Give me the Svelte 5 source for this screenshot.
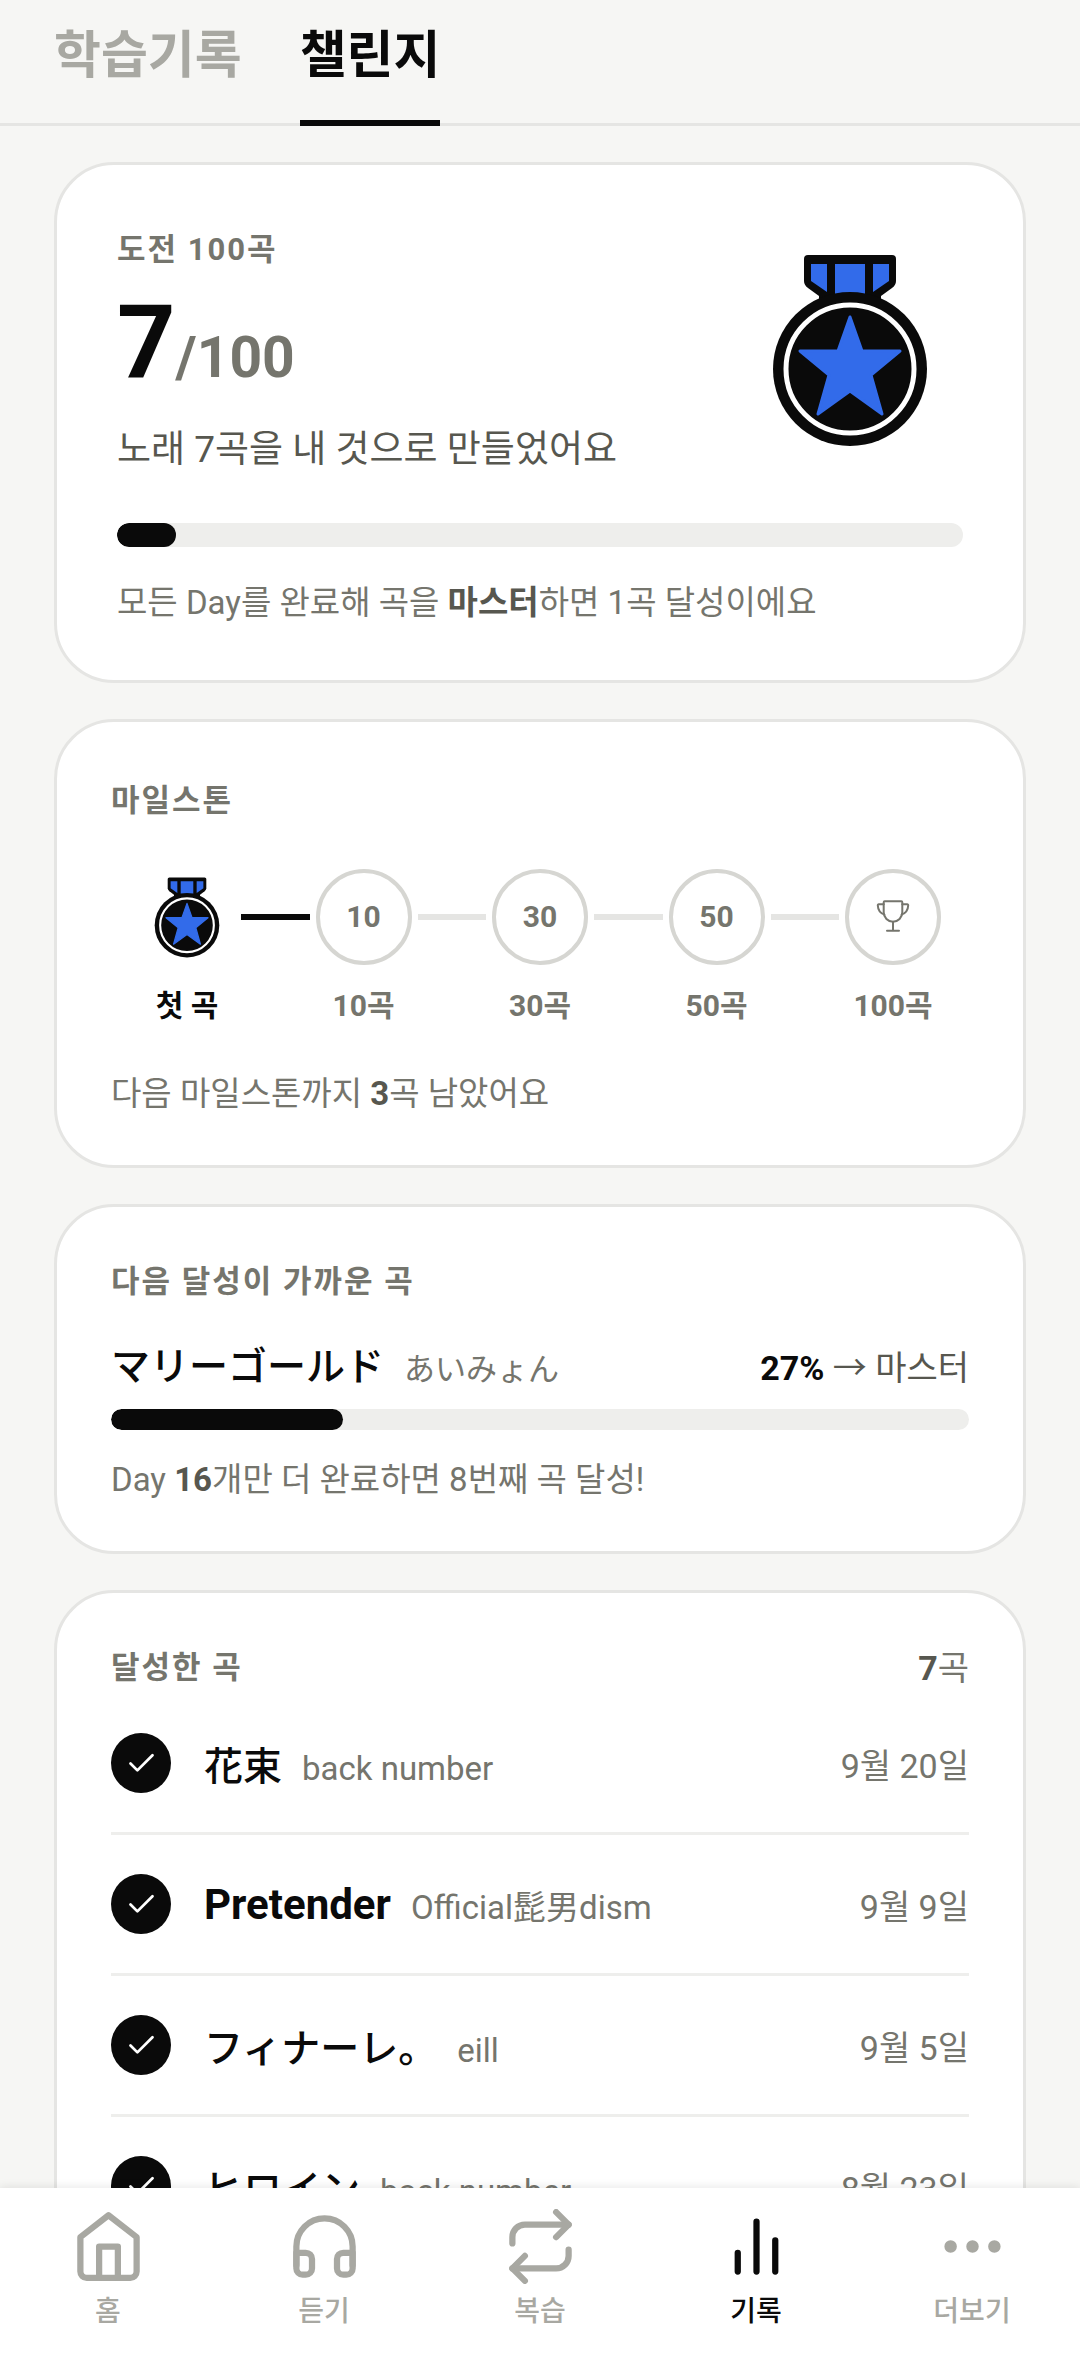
<script lang="ts">
    type Milestone = { label: string; value?: number; reached?: boolean };
    type Song = { title: string; artist: string; date: string; lang: string };

    const tabs = ['학습기록', '챌린지'];
    let activeTab = '챌린지';

    const goal = 100;
    const mastered = 7;

    const milestones: Milestone[] = [
        { label: '첫 곡', reached: true },
        { label: '10곡', value: 10 },
        { label: '30곡', value: 30 },
        { label: '50곡', value: 50 },
        { label: '100곡' },
    ];

    const nextSong = { title: 'マリーゴールド', artist: 'あいみょん', percent: 27, daysLeft: 16 };

    const songs: Song[] = [
        { title: '花束', artist: 'back number', date: '9월 20일', lang: 'ja' },
        { title: 'Pretender', artist: 'Official髭男dism', date: '9월 9일', lang: 'en' },
        { title: 'フィナーレ。', artist: 'eill', date: '9월 5일', lang: 'ja' },
        { title: 'ヒロイン', artist: 'back number', date: '8월 23일', lang: 'ja' },
    ];

    const navItems = [
        { id: 'home', label: '홈' },
        { id: 'listen', label: '듣기' },
        { id: 'review', label: '복습' },
        { id: 'record', label: '기록' },
        { id: 'more', label: '더보기' },
    ];
    let activeNav = 'record';

    $: goalPercent = (mastered / goal) * 100;
</script>

{#snippet medal()}
    <rect x="50" y="36" width="62" height="16" fill="#0a0a0a" />
    <path d="M39 1h84q4 0 4 4v22q0 4-4 7l-11 8H50l-11-8q-4-3-4-7V5q0-4 4-4z" fill="#0a0a0a" />
    <path d="M42 10h16v28l-16-11z M66 10h30v31H66z M104 10h16v17l-16 11z" fill="#326bea" />
    <circle cx="81" cy="115" r="77" fill="#0a0a0a" />
    <circle cx="81" cy="115" r="64" fill="none" stroke="#fff" stroke-width="5" />
    <path
        d="M81 63l12 34h38l-29 24 11 39-32-23-32 23 11-39-29-24h38z"
        fill="#326bea" stroke="#326bea" stroke-width="3" stroke-linejoin="round"
    />
{/snippet}

<div class="app">
    <header class="tabs">
        {#each tabs as tab}
            <button class="tab" class:activeTab={activeTab === tab} on:click={() => (activeTab = tab)}>{tab}</button>
        {/each}
    </header>

    <main>
        <section class="card hero">
            <div class="hero-top">
                <div class="hero-text">
                    <h2>도전 100곡</h2>
                    <p class="score"><b>{mastered}</b><span>/{goal}</span></p>
                    <p class="summary">노래 {mastered}곡을 내 것으로 만들었어요</p>
                </div>
                <svg class="hero-medal" viewBox="-34 -16 228 228" aria-hidden="true">{@render medal()}</svg>
            </div>
            <div class="track large"><div class="fill" style="width: {goalPercent}%"></div></div>
            <p class="note">모든 Day를 완료해 곡을 <b>마스터</b>하면 1곡 달성이에요</p>
        </section>

        <section class="card steps">
            <h2>마일스톤</h2>
            <ol class="milestones">
                {#each milestones as stone, i}
                    {#if i > 0}
                        <li class="link" class:done={milestones[i - 1].reached} aria-hidden="true"></li>
                    {/if}
                    <li class="stone" class:reached={stone.reached}>
                        <div class="badge">
                            {#if stone.reached}
                                <svg class="small-medal" viewBox="0 0 162 193" aria-hidden="true">{@render medal()}</svg>
                            {:else if stone.value}
                                {stone.value}
                            {:else}
                                <svg class="trophy" viewBox="0 0 36 36" aria-hidden="true">
                                    <path d="M9.7 2.3h16.6q1 0 1 1v10a9.3 9.4 0 0 1-18.6 0v-10q0-1 1-1z" />
                                    <path d="M8.7 5.3H3.8q-1.1 0-1 1.2c.2 4.6 2.4 7.6 6.6 9.1M27.3 5.3h4.9q1.1 0 1 1.2c-.2 4.6-2.4 7.6-6.6 9.1" />
                                    <path d="M18 22.7v9M12 31.8h12" />
                                </svg>
                            {/if}
                        </div>
                        <span>{stone.label}</span>
                    </li>
                {/each}
            </ol>
            <p class="note">다음 마일스톤까지 <b>3</b>곡 남았어요</p>
        </section>

        <section class="card">
            <h2>다음 달성이 가까운 곡</h2>
            <div class="next">
                <div class="song-name">
                    <span class="title" lang="ja">{nextSong.title}</span>
                    <span class="artist" lang="ja">{nextSong.artist}</span>
                </div>
                <p class="percent"><b>{nextSong.percent}%</b> → 마스터</p>
            </div>
            <div class="track"><div class="fill" style="width: {nextSong.percent}%"></div></div>
            <p class="note">Day <b>{nextSong.daysLeft}</b>개만 더 완료하면 8번째 곡 달성!</p>
        </section>

        <section class="card">
            <div class="list-head">
                <h2>달성한 곡</h2>
                <p class="count"><b>{mastered}</b>곡</p>
            </div>
            <ul class="songs">
                {#each songs as song}
                    <li>
                        <span class="check">
                            <svg viewBox="0 0 24 24" aria-hidden="true"><polyline points="20 6 9 17 4 12" /></svg>
                        </span>
                        <div class="song-name">
                            <span class="title" lang={song.lang}>{song.title}</span>
                            <span class="artist">{song.artist}</span>
                        </div>
                        <time>{song.date}</time>
                    </li>
                {/each}
            </ul>
        </section>
    </main>

    <nav>
        {#each navItems as item}
            <button class="nav-item" class:activeNav={activeNav === item.id} on:click={() => (activeNav = item.id)}>
                <svg viewBox="0 0 24 24" aria-hidden="true">
                    {#if item.id === 'home'}
                        <path d="M3 9l9-7 9 7v11a2 2 0 0 1-2 2H5a2 2 0 0 1-2-2z" />
                        <polyline points="9 22 9 12 15 12 15 22" />
                    {:else if item.id === 'listen'}
                        <path d="M3 18v-6a9 9 0 0 1 18 0v6" />
                        <path d="M21 19a2 2 0 0 1-2 2h-1a2 2 0 0 1-2-2v-3a2 2 0 0 1 2-2h3zM3 19a2 2 0 0 0 2 2h1a2 2 0 0 0 2-2v-3a2 2 0 0 0-2-2H3z" />
                    {:else if item.id === 'review'}
                        <polyline points="17 1 21 5 17 9" />
                        <path d="M3 11V9a4 4 0 0 1 4-4h14" />
                        <polyline points="7 23 3 19 7 15" />
                        <path d="M21 13v2a4 4 0 0 1-4 4H3" />
                    {:else if item.id === 'record'}
                        <path d="M18 20V10M12 20V4M6 20v-6" />
                    {:else}
                        <circle cx="5" cy="12" r="1" />
                        <circle cx="12" cy="12" r="1" />
                        <circle cx="19" cy="12" r="1" />
                    {/if}
                </svg>
                {item.label}
            </button>
        {/each}
    </nav>
</div>

<style>
    :global(body) {
        background: #f6f6f4;
    }

    .app {
        display: flex;
        flex-direction: column;
        height: 100vh;
        overflow: hidden;
        background: #f6f6f4;
        color: #0a0a0a;
        font-family: Roboto, 'Noto Sans CJK KR', sans-serif;
        font-size: 33px;
    }

    h2, p, ol, ul {
        margin: 0;
        padding: 0;
        list-style: none;
    }

    button {
        border: 0;
        background: none;
        font-family: inherit;
        cursor: pointer;
    }

    .tabs {
        display: flex;
        flex: none;
        gap: 58px;
        padding: 20px 54px 0;
        border-bottom: 3px solid #e5e5e3;
    }

    .tab {
        margin-bottom: -3px;
        padding: 0 0 28px;
        border-bottom: 6px solid transparent;
        color: #a8a8a2;
        font-size: 51px;
        font-weight: 700;
        line-height: 72px;
    }

    .activeTab {
        border-color: #0a0a0a;
        color: #0a0a0a;
    }

    main {
        display: flex;
        flex: 1;
        flex-direction: column;
        gap: 36px;
        min-height: 0;
        padding: 36px 54px;
        overflow-y: auto;
        scrollbar-width: none;
    }

    .card {
        flex: none;
        padding: 52px 54px 54px;
        border: 3px solid #e5e5e3;
        border-radius: 60px;
        background: #fff;
    }

    .hero {
        padding: 62px 60px 60px;
    }

    .steps {
        padding-top: 56px;
    }

    h2 {
        color: #75756d;
        font-size: 31px;
        font-weight: 700;
        line-height: 46px;
        letter-spacing: 2px;
    }

    .hero-top {
        display: flex;
        align-items: center;
        justify-content: space-between;
        margin-bottom: 46px;
    }

    .score {
        display: flex;
        align-items: baseline;
        margin: 18px 0 30px;
    }

    .score b {
        font-size: 102px;
        line-height: 102px;
    }

    .score span {
        color: #75756d;
        font-size: 57px;
        font-weight: 700;
        line-height: 57px;
    }

    .summary {
        color: #57574f;
        font-size: 37px;
        line-height: 54px;
    }

    .hero-medal {
        flex: none;
        width: 228px;
    }

    .track {
        height: 21px;
        overflow: hidden;
        border-radius: 12px;
        background: #eeeeec;
    }

    .large {
        height: 24px;
    }

    .fill {
        height: 100%;
        border-radius: 12px;
        background: #0a0a0a;
    }

    .note {
        margin-top: 33px;
        color: #75756d;
        line-height: 34px;
    }

    .hero .note {
        margin-top: 39px;
    }

    .note b, .count b {
        color: #57574f;
    }

    .milestones {
        display: flex;
        margin: 45px 0 48px;
        padding: 0 28px;
    }

    .link {
        flex: 1;
        height: 6px;
        margin: 45px 6px 0;
        background: #e5e5e3;
    }

    .done {
        background: #0a0a0a;
    }

    .stone {
        display: flex;
        flex-direction: column;
        align-items: center;
        gap: 18px;
        width: 96px;
        color: #75756d;
        font-size: 30px;
        font-weight: 700;
        line-height: 46px;
        white-space: nowrap;
    }

    .badge {
        display: flex;
        align-items: center;
        justify-content: center;
        box-sizing: border-box;
        width: 96px;
        height: 96px;
        border: 4px solid #d6d6d2;
        border-radius: 50%;
    }

    .reached {
        color: #0a0a0a;
    }

    .reached .badge {
        border-color: transparent;
    }

    .small-medal {
        width: 68px;
    }

    .trophy {
        width: 36px;
        fill: none;
        stroke: #75756d;
        stroke-width: 2;
        stroke-linecap: round;
    }

    .next {
        display: flex;
        align-items: baseline;
        justify-content: space-between;
        margin: 30px 0 18px;
    }

    .song-name {
        display: flex;
        align-items: baseline;
        gap: 20px;
        font-family: Roboto, 'Noto Sans CJK JP', sans-serif;
    }

    .title {
        font-size: 42px;
        font-weight: 700;
    }

    /* kana and kanji run wider and heavier than Latin at the same size */
    .title:lang(ja) {
        font-size: 39px;
        font-weight: 500;
    }

    .artist {
        color: #75756d;
    }

    .artist:lang(ja) {
        font-size: 31px;
    }

    .percent {
        color: #57574f;
        font-size: 34px;
    }

    .percent b {
        color: #0a0a0a;
    }

    .list-head {
        display: flex;
        align-items: center;
        justify-content: space-between;
        margin-bottom: 3px;
    }

    .count {
        color: #75756d;
        font-size: 34px;
        line-height: 46px;
    }

    .songs li {
        display: flex;
        align-items: center;
        height: 138px;
        border-bottom: 3px solid #eeeeec;
    }

    .songs li:last-child {
        border-bottom: 0;
    }

    .check {
        display: flex;
        align-items: center;
        justify-content: center;
        width: 60px;
        height: 60px;
        margin-right: 33px;
        border-radius: 50%;
        background: #0a0a0a;
    }

    .check svg {
        width: 33px;
        fill: none;
        stroke: #fff;
        stroke-width: 2;
        stroke-linecap: round;
        stroke-linejoin: round;
    }

    time {
        margin-left: auto;
        color: #75756d;
        font-size: 34px;
    }

    nav {
        position: relative;
        display: flex;
        flex: none;
        padding: 21px 0 32px;
        background: #fff;
        box-shadow: 0 -2px 8px rgba(0, 0, 0, 0.08);
    }

    .nav-item {
        display: flex;
        flex: 1;
        flex-direction: column;
        align-items: center;
        gap: 6px;
        padding: 0;
        color: #a8a8a2;
        font-size: 28px;
        font-weight: 500;
        line-height: 44px;
    }

    .nav-item svg {
        width: 75px;
        fill: none;
        stroke: currentColor;
        stroke-width: 2;
        stroke-linecap: round;
        stroke-linejoin: round;
    }

    .activeNav {
        color: #0a0a0a;
    }
</style>
